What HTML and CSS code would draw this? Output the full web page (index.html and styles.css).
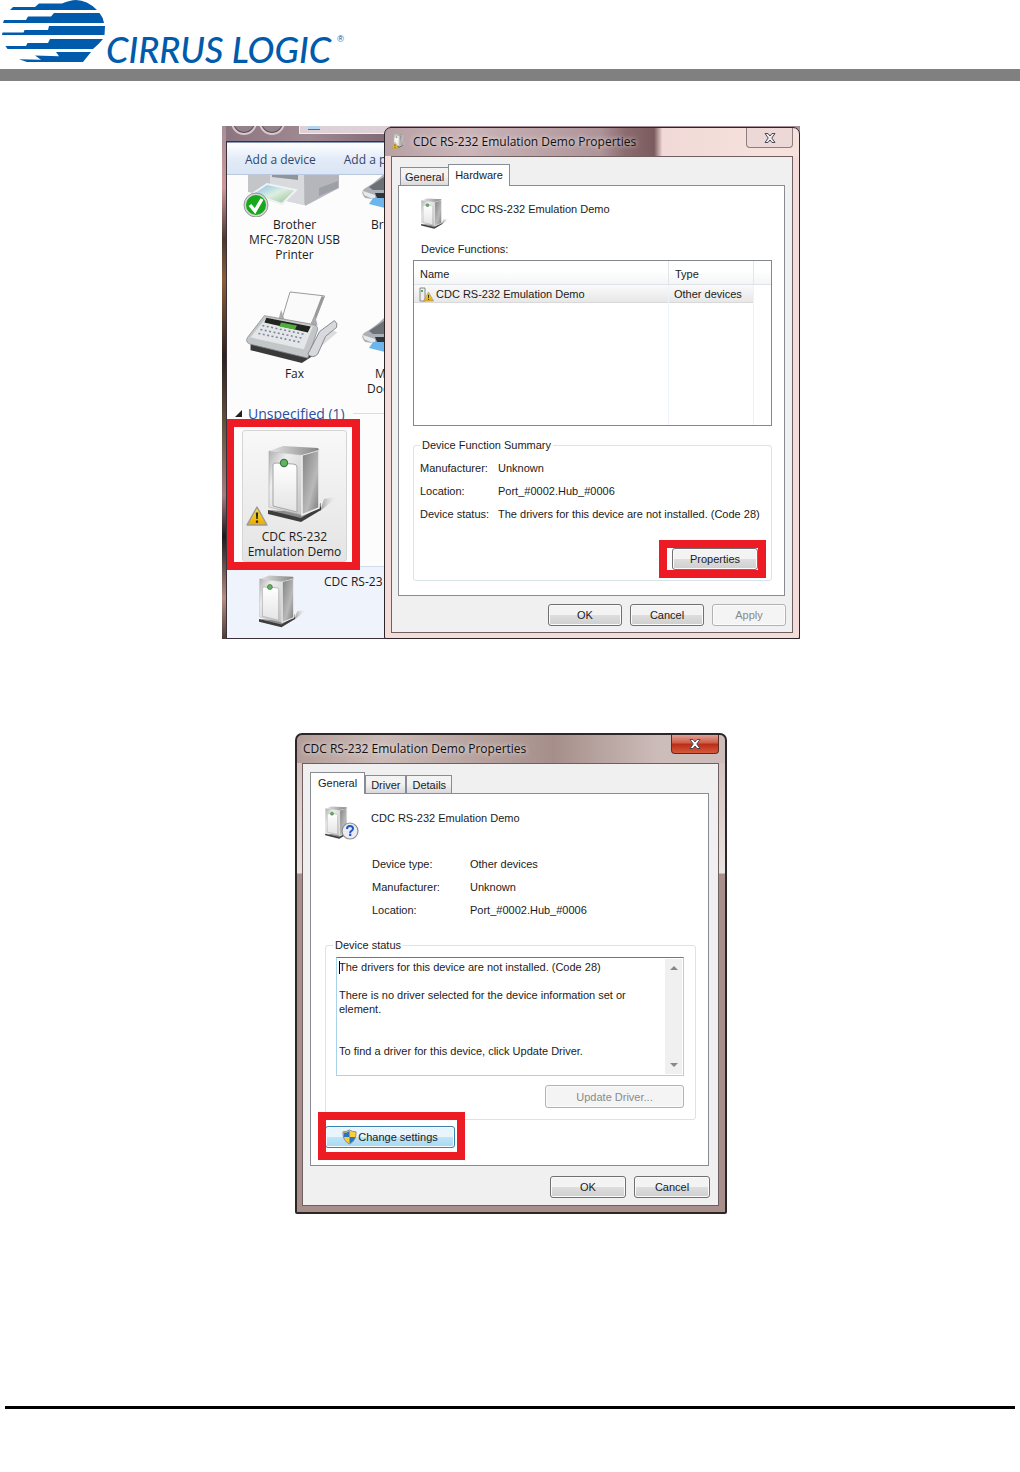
FILE: index.html
```html
<!DOCTYPE html>
<html lang="en">
<head>
<meta charset="utf-8">
<meta name="viewport" content="width=device-width, initial-scale=1">
<title>Cirrus Logic – CDC RS-232 Emulation Demo</title>
<link rel="stylesheet" href="styles.css">
</head>
<body>
<svg class="defs" aria-hidden="true">
  <defs>
    <linearGradient id="front" x1="0" y1="0" x2="1" y2="1"><stop offset="0" stop-color="#b0b0b0"/><stop offset=".3" stop-color="#eeeeee"/><stop offset="1" stop-color="#c4c4c4"/></linearGradient>
    <linearGradient id="side" x1="0" y1="0" x2="1" y2="1"><stop offset="0" stop-color="#808080"/><stop offset=".6" stop-color="#b9b9b9"/><stop offset="1" stop-color="#777"/></linearGradient>
    <linearGradient id="top" x1="0" y1="0" x2="1" y2="0"><stop offset="0" stop-color="#e6e6e6"/><stop offset="1" stop-color="#858585"/></linearGradient>
    <linearGradient id="panel" x1="0" y1="0" x2="0" y2="1"><stop offset="0" stop-color="#fff"/><stop offset="1" stop-color="#e4e4e4"/></linearGradient>
    <linearGradient id="shade" x1="0" y1="0" x2="1" y2="0"><stop offset="0" stop-color="#999"/><stop offset="1" stop-color="#fff" stop-opacity="0"/></linearGradient>
    <linearGradient id="sign" x1="0" y1="0" x2="0" y2="1"><stop offset="0" stop-color="#fbe23a"/><stop offset="1" stop-color="#eda900"/></linearGradient>
    <linearGradient id="photo" x1="0" y1="0" x2="1" y2="1"><stop offset="0" stop-color="#7db8e8"/><stop offset=".5" stop-color="#dcefe0"/><stop offset="1" stop-color="#8fb98a"/></linearGradient>
    <symbol id="tower" viewBox="0 0 72 80">
      <path d="M52 66 71 51 56 54z" fill="url(#shade)"/>
      <path d="M0 65v4l33 8 20-12v-4L33 71z" fill="#3d3d3d"/>
      <path d="M0 65l33 8 20-12v-3L33 67z" fill="#8b8b8b"/>
      <path d="M1 6 34 10v60L1 62z" fill="url(#front)" stroke="#aaa" stroke-width=".6"/>
      <path d="M34 10 51 5v58L34 70z" fill="url(#side)"/>
      <path d="M34 10 51 5v58l-17 7z" fill="none" stroke="#efefef" stroke-width="1.600"/>
      <path d="M1 6 15 1 50 3l1 2L34 10z" fill="url(#top)"/>
      <path d="M5 20q0-2 3-2l17 1q4 0 4 3v45L5 61z" fill="url(#panel)" stroke="#a5a5a5" stroke-width="1"/>
      <circle cx="16" cy="18" r="3.600" fill="#5cb85c" stroke="#48704a" stroke-width="1.200"/>
    </symbol>
    <symbol id="warn" viewBox="0 0 22 20">
      <path d="M11 1 21 19H1z" fill="url(#sign)" stroke="#9a9a9a" stroke-width="1.4" stroke-linejoin="round"/>
      <path d="M9.800 6.500h2.400l-.5 6.500h-1.400zM9.900 14.500h2.200v2.200H9.900z" fill="#2b2410"/>
    </symbol>
    <symbol id="scanner" viewBox="0 0 32 42">
      <path d="M3 16Q14 10 24 0l8-1v28H18L4 25Q-1 20 3 16z" fill="#aab0b5"/>
      <path d="M8 14 26 2l6 1v14L12 17z" fill="#6b7176"/>
      <path d="M2 18 14 22v5L3 22z" fill="#e6e9eb"/>
      <path d="M12 25l14 0 6 2v10l-24-6z" fill="#6db6ec"/>
      <path d="M14 20h18v5H16z" fill="#30353a"/>
    </symbol>
  </defs>
</svg>

<header class="masthead">
  <a class="brand" href="#">
    <svg class="brand-mark" viewBox="0 0 106 62" aria-hidden="true">
      <g fill="#005bac">
        <path d="M10 10 13 7H35L39 3.500H62Q70 0 76 0 87 0 97 10z"/>
        <path d="M3 23 4 20H26L28 16.500H51L54 13H99.500Q103 17 104 23z"/>
        <path d="M2 35 2.500 32.500H23.500L24.500 30H48L49 26H105L104.500 35z"/>
        <path d="M7.500 49 5.500 46H26L27.500 43H48L50 39H103Q99 44 93 49z"/>
        <path d="M27 62 19 59.300 41 59.700 35 55.500 59 56.300 56 52H91L83 62z"/>
      </g>
    </svg>
    <span class="brand-name">CIRRUS LOGIC</span><span class="brand-reg">®</span>
  </a>
</header>

<main class="sheet">
  <section class="desktop" aria-label="Devices and Printers">
    <div class="explorer">
      <div class="explorer-top">
        <span class="nav-dot"></span><span class="nav-dot"></span><span class="address"><i></i></span>
      </div>
      <div class="explorer-body">
        <nav class="commands"><a href="#">Add a device</a><a href="#">Add a p</a></nav>
        <div class="devices">
          <div class="device">
            <svg class="device-art printer" viewBox="0 0 100 42" aria-hidden="true">
              <path d="M6 0H97V12L62 30 6 17z" fill="#c3c5c9"/>
              <path d="M62 0H97V13L63 31z" fill="#b4b6bb"/>
              <path d="M77 13 96 6v7L77 21z" fill="#9da0a6"/>
              <path d="M28 0h34v30L28 22z" fill="#d8dadd"/>
              <path d="M30 0h26v5L30 2z" fill="#8f959c"/>
              <path d="M10 19 25 9 54 15 40 29z" fill="url(#photo)" stroke="#eef2f5" stroke-width="2"/>
              <circle cx="14" cy="30" r="11" fill="#17a81c" stroke="#d5d5d5" stroke-width="2"/>
              <circle cx="14" cy="30" r="12" fill="none" stroke="#777" stroke-width=".7"/>
              <path d="M8 30l5 6 7-12" fill="none" stroke="#fff" stroke-width="3.400"/>
            </svg>
            <span>Brother<br>MFC-7820N USB<br>Printer</span>
          </div>
          <div class="device device-cut">
            <svg class="device-art scan" viewBox="0 0 32 42" aria-hidden="true"><use href="#scanner" y="-2"/></svg>
            <span class="bro">Bro</span>
          </div>
          <div class="device">
            <svg class="device-art fax" viewBox="0 0 100 78" aria-hidden="true">
              <path d="M70 66 96 44 88 40z" fill="#ddd"/>
              <path d="M8 54v8l52 13 12-8v-9z" fill="#3a3a3a"/>
              <path d="M48 3 83 7 70 37 39 33z" fill="#fafafa" stroke="#999" stroke-width="1"/>
              <path d="M80 7l3 1-11 29-3-1z" fill="#999"/>
              <path d="M36 32l3-11 4 12zM68 37l5-11 3 11z" fill="#aaa"/>
              <path d="M22 27 72 36Q78 38 75 44L66 70 8 56Q2 54 5 49z" fill="#c4c7ca" stroke="#8a8d90" stroke-width=".8"/>
              <path d="M24 29 71 38 62 61 8 49z" fill="#e4e6e8"/>
              <path d="M24 29 69 38l-3 6L22 34z" fill="#20261f"/>
              <path d="M39 34 55 37l-2 4L37 38z" fill="#4fae3b"/>
              <g stroke="#7b87a0" stroke-width="1.600" stroke-dasharray="2 2.500"><path d="M20 37 63 46M18 41 61 50M16 45 59 54"/></g>
              <path d="M66 66 78 43 93 32q4 3 2 7L84 48 76 66q-5 5-10 0z" fill="#d7d9dc" stroke="#85888b" stroke-width="1"/>
            </svg>
            <span>Fax</span>
          </div>
          <div class="device device-cut">
            <svg class="device-art scan scan-low" viewBox="0 0 32 42" aria-hidden="true"><use href="#scanner"/></svg>
            <span class="m">M</span><span>Doc</span>
          </div>
        </div>
        <h2 class="group"><svg viewBox="0 0 7 7" aria-hidden="true"><path d="M7 0v7H0z" fill="#222"/></svg>Unspecified (1)</h2>
        <div class="picked">
          <svg class="picked-tower" aria-hidden="true"><use href="#tower"/></svg>
          <svg class="picked-warn" aria-hidden="true"><use href="#warn"/></svg>
          <span>CDC RS-232<br>Emulation Demo</span>
        </div>
        <div class="details">
          <svg aria-hidden="true"><use href="#tower"/></svg>
          <span>CDC RS-23</span>
        </div>
      </div>
    </div>

    <div class="dialog dialog-light" role="dialog" aria-labelledby="t1">
      <div class="titlebar">
        <svg class="title-icon" viewBox="0 0 16 16" aria-hidden="true"><use href="#tower" x="2" y="0" width="14" height="14"/><use href="#warn" x="0" y="8" width="8" height="7"/></svg>
        <h2 id="t1">CDC RS-232 Emulation Demo Properties</h2>
        <button class="close" type="button" aria-label="Close"><svg viewBox="0 0 12 10"><path d="M1 .5h3L6 3 8 .5h3L7.800 5 11 9.500H8L6 7 4 9.500H1L4.200 5z"/></svg></button>
      </div>
      <div class="client">
        <div class="tabs"><button class="tab tab-first" type="button">General</button><button class="tab tab-on" type="button">Hardware</button></div>
        <div class="page">
          <div class="subject"><svg aria-hidden="true"><use href="#tower"/></svg><span>CDC RS-232 Emulation Demo</span></div>
          <p class="caption">Device Functions:</p>
          <table class="functions">
            <thead><tr><th class="c-name">Name</th><th class="c-type">Type</th><th class="c-rest"></th></tr></thead>
            <tbody>
              <tr class="row-on"><td><span class="cell"><svg viewBox="0 0 15 15" aria-hidden="true"><path d="M1 1h5v13H1z" fill="#eee" stroke="#888"/><path d="M2 3h2v2H2z" fill="#4b4"/><use href="#warn" x="4" y="4" width="11" height="11"/></svg>CDC RS-232 Emulation Demo</span></td><td>Other devices</td><td></td></tr>
              <tr class="row-fill"><td></td><td></td><td></td></tr>
            </tbody>
          </table>
          <fieldset class="group-box summary">
            <legend>Device Function Summary</legend>
            <dl class="facts">
              <dt>Manufacturer:</dt><dd>Unknown</dd>
              <dt>Location:</dt><dd>Port_#0002.Hub_#0006</dd>
              <dt>Device status:</dt><dd>The drivers for this device are not installed. (Code 28)</dd>
            </dl>
            <div class="marked"><button class="btn" type="button">Properties</button></div>
          </fieldset>
        </div>
        <div class="actions"><button class="btn" type="button">OK</button><button class="btn" type="button">Cancel</button><button class="btn" type="button" disabled>Apply</button></div>
      </div>
    </div>
  </section>

  <section class="dialog dialog-dark" role="dialog" aria-labelledby="t2">
    <div class="titlebar">
      <h2 id="t2">CDC RS-232 Emulation Demo Properties</h2>
      <button class="close" type="button" aria-label="Close"><svg viewBox="0 0 12 10"><path d="M1 .5h3L6 3 8 .5h3L7.800 5 11 9.500H8L6 7 4 9.500H1L4.200 5z"/></svg></button>
    </div>
    <div class="client">
      <div class="tabs"><button class="tab tab-on" type="button">General</button><button class="tab" type="button">Driver</button><button class="tab" type="button">Details</button></div>
      <div class="page">
        <div class="subject">
          <svg viewBox="0 0 34 34" aria-hidden="true"><use href="#tower" width="31" height="34"/><circle cx="25" cy="25" r="8" fill="#e9edf3" stroke="#8d8d8d" stroke-width="1.200"/><path d="M22 23q0-3 3-3t3 2.500q0 1.500-1.500 2.300T25.200 27v.6M24.100 29h2.200" fill="none" stroke="#2556c4" stroke-width="2"/></svg>
          <span>CDC RS-232 Emulation Demo</span>
        </div>
        <dl class="facts">
          <dt>Device type:</dt><dd>Other devices</dd>
          <dt>Manufacturer:</dt><dd>Unknown</dd>
          <dt>Location:</dt><dd>Port_#0002.Hub_#0006</dd>
        </dl>
        <fieldset class="group-box status">
          <legend><label for="status">Device status</label></legend>
          <div class="status-box">
            <textarea id="status" readonly>The drivers for this device are not installed. (Code 28)

There is no driver selected for the device information set or element.


To find a driver for this device, click Update Driver.</textarea>
            <div class="scroll" aria-hidden="true"><svg viewBox="0 0 8 4"><path d="M4 0l4 4H0z"/></svg><svg viewBox="0 0 8 4"><path d="M0 0h8L4 4z"/></svg></div>
          </div>
          <button class="btn update" type="button" disabled>Update Driver...</button>
        </fieldset>
        <div class="change">
          <button class="btn btn-hot" type="button"><svg viewBox="0 0 16 16" aria-hidden="true"><path d="M8 .5Q11 2.500 15 2.500 15.500 12 8 15.500.500 12 1 2.500 5 2.500 8 .5z" fill="#f7d038" stroke="#888" stroke-width="1"/><path d="M8 1.500V8H1.800L2 3.500Q5 3.500 8 1.500zM8 8h6.200Q13 12.500 8 14.800z" fill="#2e73c9"/></svg>Change settings</button>
        </div>
      </div>
      <div class="actions"><button class="btn" type="button">OK</button><button class="btn" type="button">Cancel</button></div>
    </div>
  </section>
</main>
<footer class="rule"></footer>
</body>
</html>
```
FILE: styles.css
```css
* { box-sizing: border-box; }

body {
  margin: 0;
  min-height: 100vh;
  display: flex;
  flex-direction: column;
  background: #fff;
  color: #1b1b1b;
  font: 11px/16px "Liberation Sans", Arial, sans-serif;
}

h2, p, dl, dd { margin: 0; font-weight: normal; }
button, textarea { font: inherit; color: inherit; }
svg { display: block; flex: none; }
.defs { position: absolute; width: 0; height: 0; }

/* Masthead */
.masthead { border-bottom: 12px solid #808080; height: 81px; }
.brand {
  display: flex;
  align-items: flex-end;
  height: 62px;
  color: #005bac;
  text-decoration: none;
}
.brand-mark { width: 106px; height: 62px; }
.brand-name { font: italic 500 36px/36px Lato, sans-serif; margin-bottom: -5px; }
.brand-reg { font: 9px/9px "Liberation Sans", sans-serif; margin: 0 0 18px 6px; }

.sheet {
  display: flex;
  flex-direction: column;
  align-items: center;
  gap: 94px;
  padding: 45px 8px 0 10px;
}
.rule { margin: auto 5px 0; height: 66px; border-top: 3px solid #000; }

/* Explorer window behind the dialog */
.desktop {
  position: relative;
  width: 100%;
  max-width: 578px;
  padding-left: 4px;
  overflow: hidden;
  background: linear-gradient(#a58f99, #c99 12%, #4a3a30 22%, #8a5f3a 30%, #2b2320 45%, #6b5a40 60%, #a37c80 72%, #1c1a1a 80%, #b58d84 92%, #4a3c38);
  font: 12px/15px "Open Sans", sans-serif;
}
.explorer { width: 164px; }
.explorer-top {
  display: flex;
  gap: 2px;
  height: 15px;
  padding-left: 5px;
  overflow: hidden;
  background: linear-gradient(90deg, #8d7580, #a08a92 50%, #7f6873);
}
.nav-dot { flex: none; width: 26px; height: 26px; margin-top: -17px; border: 2px solid #d5c8ce; border-radius: 50%; background: #94828b; box-shadow: inset 0 0 0 1px #5f4d57; }
.address { flex: 1; height: 8px; margin-left: 12px; padding: 0 8px; background: #ddd0d6; border: solid #f3ecef; border-width: 0 0 1px 1px; }
.address i { display: block; width: 12px; height: 4px; border-bottom: 1px solid #5c6b80; background: #b5d4f0; }
.explorer-body { border: solid #3c3038; border-width: 1px 0 1px 1px; background: #fcfcfc; overflow: hidden; }
.commands {
  display: flex;
  gap: 28px;
  height: 33px;
  padding: 9px 0 0 18px;
  background: linear-gradient(#fafcfe 10%, #e3ecf8 50%, #dae5f4);
  border-top: 1px solid #8a99b5;
  border-bottom: 1px solid #b9c8de;
  white-space: nowrap;
}
.commands a { color: #34456a; text-decoration: none; }
.devices { display: grid; grid-template-columns: 105px 40px; gap: 26px 12px; padding-left: 15px; height: 221px; }
.device { text-align: center; white-space: nowrap; }
.device-cut { text-align: left; padding-left: 8px; }
.device-cut span { display: block; }
.device-cut .m { padding-left: 8px; }
.device-cut .bro { padding-left: 4px; }
.device-art { display: block; height: 42px; }
.printer { width: 100px; }
.scan { width: 32px; margin-left: -6px; }
.fax { width: 100px; height: 77px; }
.scan-low { margin: 28px 0 7px -6px; }
.group { display: flex; align-items: center; height: 30px; font-size: 14px; line-height: 18px; color: #2d4f9e; padding: 5px 0 0 8px; white-space: nowrap; }
.group svg { width: 7px; height: 7px; margin-right: 6px; }
.group::after { content: ""; width: 40px; height: 1px; margin-left: 8px; background: #ddd; }
.picked {
  position: relative;
  width: 105px;
  height: 132px;
  margin: 4px 0 4px 15px;
  padding-top: 14px;
  border: 1px solid #d5d5d5;
  border-radius: 3px;
  background: linear-gradient(#f8f8f8, #e4e4e4);
  text-align: center;
  white-space: nowrap;
}
.picked::after { content: ""; position: absolute; inset: -12px -14px -9px -17px; border: 8px solid #ed1c24; }
.picked-tower { width: 72px; height: 80px; margin: 0 0 4px 25px; }
.picked-warn { position: absolute; left: 3px; top: 75px; width: 22px; height: 20px; }
.details { display: flex; gap: 16px; height: 72px; padding: 7px 0 0 32px; background: #eff3fb; border-top: 1px solid #cfdcec; white-space: nowrap; }
.details svg { width: 49px; height: 56px; }

/* Property dialogs */
.dialog { border: 1px solid #2c2628; border-radius: 7px 7px 2px 2px; }
.titlebar { display: flex; align-items: center; font: 12px/16px "Open Sans", sans-serif; }
.titlebar h2 { flex: 1; font: inherit; color: #111; white-space: nowrap; text-shadow: 0 0 5px #fff; }
.close { display: flex; justify-content: center; align-items: center; align-self: flex-start; padding: 0; height: 20px; border: 1px solid #8f7c7e; border-top: 0; border-radius: 0 0 4px 4px; width: 48px; }
.close svg { width: 12px; height: 10px; fill: #fff; stroke: #444c5a; overflow: visible; }
.client { border: 1px solid #6e5f60; background: #f0f0f0; font: 11px/16px "Liberation Sans", Arial, sans-serif; }

.tabs { display: flex; align-items: flex-end; height: 21px; }
.tab { height: 18px; padding: 0 5px; border: 1px solid #898c95; border-bottom: 0; background: linear-gradient(#f3f3f3 45%, #d9d9dd); white-space: nowrap; }
.tab-first { margin-left: 2px; padding: 0 4px; border-right: 0; }
.tab-on { height: 22px; margin-bottom: -1px; padding: 0 6px 2px; background: #fff; z-index: 1; }
.page { background: #fff; border: 1px solid #898c95; }
.subject { display: flex; }

.btn {
  height: 22px;
  padding: 0;
  border: 1px solid #707070;
  border-radius: 3px;
  background: linear-gradient(#f3f3f3 48%, #dddddd 52%, #cfcfcf);
  box-shadow: inset 0 0 0 1px #fbfbfb;
  white-space: nowrap;
}
.btn:disabled { color: #8a8a8a; background: #f4f4f4; border-color: #b0b2b5; }
.actions { display: flex; justify-content: flex-end; gap: 8px; }

.group-box { margin: 0; border: 1px solid #d8e3ea; border-radius: 3px; min-width: 0; }
.group-box legend { padding: 0 2px; height: 16px; }
.facts { display: grid; grid-auto-rows: 23px; align-items: center; white-space: nowrap; }

/* Light dialog */
.dialog-light {
  position: absolute;
  top: 1px;
  right: 0;
  width: 416px;
  padding: 0 6px 5px;
  background: linear-gradient(90deg, #b7a1a6, #cbb5b8 20%, #ae9499 52%, #8c6c70 58%, #7b5b5e 65%, #f0d9d6 67%, #f6e1dd 90%) top / 100% 28px no-repeat, #f3dcd9;
}
.dialog-light .titlebar { height: 28px; }
.dialog-light .title-icon { width: 16px; height: 16px; margin-right: 6px; }
.dialog-light .close { width: 47px; background: #ecd8d6; }
.dialog-light .close svg { fill: #f4eaea; }
.dialog-light .client { padding: 7px 7px 6px 6px; }
.dialog-light .page { padding: 0 12px 14px 14px; }
.dialog-light .subject { height: 50px; padding: 12px 0 0 8px; gap: 11px; }
.dialog-light .subject svg { width: 29px; height: 32px; }
.dialog-light .subject span { padding-top: 3px; }
.caption { height: 24px; padding: 5px 0 0 8px; }
.functions { width: 100%; height: 166px; border: 1px solid #828790; border-collapse: separate; border-spacing: 0; table-layout: fixed; }
.functions th { height: 24px; padding: 2px 6px 0; text-align: left; font-weight: normal; background: linear-gradient(#fff 40%, #f4f5f7); border-right: 1px solid #e2e6ea; border-bottom: 1px solid #dfe2e6; }
.functions td { height: 18px; padding: 0 5px; border-right: 1px solid #edf2f8; }
.functions .c-name { width: 255px; }
.functions .c-type { width: 85px; }
.functions th:last-child, .functions td:last-child { border-right: 0; }
.functions .row-on td:not(:last-child) { background: linear-gradient(#fafafa, #e6e6e6); box-shadow: inset 0 -1px #d9d9d9; }
.functions .row-fill td { height: auto; }
.cell { display: flex; align-items: center; }
.cell svg { width: 15px; height: 15px; margin-right: 2px; }
.summary { margin-top: 11px; padding: 3px 5px 2px 6px; }
.summary legend { margin-left: 0; }
.summary .facts { grid-template-columns: 78px 1fr; }
.marked { width: 107px; margin: 15px 0 0 auto; padding-left: 5px; border: 8px solid #ed1c24; }
.marked .btn { display: block; width: 100%; }
.dialog-light .actions { margin: 8px -1px 0 0; }
.dialog-light .actions .btn { width: 74px; }

/* Dark dialog */
.dialog-dark {
  width: 100%;
  max-width: 432px;
  border-width: 2px;
  padding: 0 6px 6px 5px;
  background: linear-gradient(90deg, #b39d99, #cbbab7 20%, #a68f8b 60%, #cdbdba 85%) top / 100% 28px no-repeat, linear-gradient(#cdbcb9, #eae2e0 138px, #a98f8c 139px, #a98f8c);
}
.dialog-dark .titlebar { height: 28px; padding-left: 1px; }
.dialog-dark .close { height: 19px; background: linear-gradient(#e0a094, #cf5a45 45%, #b92c16 50%, #d65a3c); border-color: #5e2a24; }
.dialog-dark .client { padding: 8px 8px 7px 7px; }
.dialog-dark .tab-on { padding: 0 7px 2px; }
.dialog-dark .page { margin-right: 1px; padding: 0 12px 17px 14px; }
.dialog-dark .subject { height: 58px; padding-top: 12px; gap: 12px; }
.dialog-dark .subject svg { width: 34px; height: 34px; }
.dialog-dark .subject span { padding-top: 4px; }
.dialog-dark .facts { grid-template-columns: 98px 1fr; padding-left: 47px; }
.status { margin-top: 16px; padding: 4px 11px 11px 10px; }
.status legend { margin-left: -3px; }
.status-box { position: relative; display: flex; height: 119px; border: 1px solid #a9d3ea; border-top-color: #4a7fb5; }
.status-box::before { content: ""; position: absolute; left: 2px; top: 3px; width: 1px; height: 13px; background: #000; }
.status-box textarea { flex: 1; min-width: 0; padding: 2px 2px 0; border: 0; outline: 0; resize: none; overflow: hidden; background: none; line-height: 14px; }
.scroll { display: flex; flex-direction: column; justify-content: space-between; align-items: center; width: 17px; margin: 1px; padding: 7px 0; background: #f0f0f0; }
.scroll svg { width: 8px; height: 4px; fill: #888; }
.update { display: block; width: 139px; height: 23px; margin: 9px 0 0 auto; }
.change { position: relative; width: 130px; margin-top: 6px; }
.change::after { content: ""; position: absolute; inset: -14px -10px -12px -7px; border: 8px solid #ed1c24; pointer-events: none; }
.btn-hot { display: flex; align-items: center; justify-content: center; gap: 1px; width: 100%; border-color: #3c7fb1; background: linear-gradient(#e8f5fc 48%, #bfe4f8 52%, #a5d8f3); }
.btn-hot svg { width: 15px; height: 16px; }
.dialog-dark .actions { margin-top: 10px; }
.dialog-dark .actions .btn { width: 76px; }
```
